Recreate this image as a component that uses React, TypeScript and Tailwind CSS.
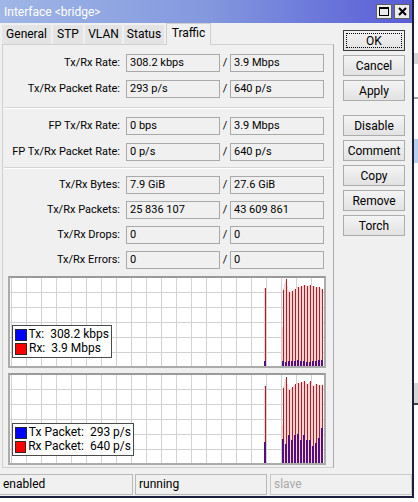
import React from "react";

const group1 = [
  ["Tx/Rx Rate:", "308.2 kbps", "3.9 Mbps"],
  ["Tx/Rx Packet Rate:", "293 p/s", "640 p/s"],
];
const group2 = [
  ["FP Tx/Rx Rate:", "0 bps", "3.9 Mbps"],
  ["FP Tx/Rx Packet Rate:", "0 p/s", "640 p/s"],
];
const group3 = [
  ["Tx/Rx Bytes:", "7.9 GiB", "27.6 GiB"],
  ["Tx/Rx Packets:", "25 836 107", "43 609 861"],
  ["Tx/Rx Drops:", "0", "0"],
  ["Tx/Rx Errors:", "0", "0"],
];

const tabs = [
  { name: "General", w: "w-[49px]" },
  { name: "STP", w: "w-[30px]" },
  { name: "VLAN", w: "w-[37px]" },
  { name: "Status", w: "w-[40px]" },
  { name: "Traffic", w: "w-[45px]" },
];
const buttons = ["OK", "Cancel", "Apply", "", "Disable", "Comment", "Copy", "Remove", "Torch"];

// graph data, in px from the top of the plot (88px tall)
const bytesChart = {
  single: { rx: 10, tx: 83 },
  rx: [12, 1, 14, 13, 11, 9, 8, 7, 8, 7, 8, 9, 9, 11],
  tx: [83, 84, 83, 83, 83, 82, 83, 83, 84, 84, 83, 83, 82, 82],
};
const packetChart = {
  single: { rx: 11, tx: 67 },
  rx: [13, 2, 15, 12, 9, 8, 7, 6, 9, 6, 11, 9, 10, 10],
  tx: [64, 69, 60, 65, 60, 59, 65, 60, 65, 65, 71, 68, 63, 53],
};

function Row({ label, a, b }: { label: string; a: string; b: string }) {
  return (
    <div className="flex items-center h-[18px]">
      <span className="w-[117px] text-right whitespace-nowrap">{label}</span>
      <div className="ml-[6px] w-[94px] h-[18px] border border-[#a9a9a9] bg-[#f0f0f0] pl-[3px] leading-[16px]">
        {a}
      </div>
      <span className="w-[10px] text-center">/</span>
      <div className="w-[94px] h-[18px] border border-[#a9a9a9] bg-[#f0f0f0] pl-[3px] leading-[16px]">
        {b}
      </div>
    </div>
  );
}

function Separator() {
  return <div className="mx-[1px] h-[2px] border-t border-[#d5d5d5] border-b border-b-white" />;
}

function Chart({ data }: { data: typeof bytesChart }) {
  const W = 314;
  const H = 88;
  const xs = data.rx.map((_, i) => 273 + i * 3);
  const pink =
    `272,${H} ` + xs.map((x, i) => `${x},${data.rx[i]}`).join(" ") + ` ${xs[xs.length - 1] + 1},${H}`;
  return (
    <svg width={W} height={H} className="block" shapeRendering="crispEdges">
      <rect width={W} height={H} fill="#fff" />
      {Array.from({ length: 21 }, (_, i) => (
        <rect key={"v" + i} x={1 + i * 15} y={0} width={1} height={H} fill="#d2d2d2" />
      ))}
      {Array.from({ length: 5 }, (_, i) => (
        <rect key={"h" + i} x={0} y={14 + i * 15} width={W} height={1} fill="#d2d2d2" />
      ))}
      <polygon points={pink} fill="#fbd3d3" />
      <rect x={254} y={data.single.rx} width={1} height={H - data.single.rx} fill="#fbd3d3" />
      <rect x={255} y={data.single.rx} width={1} height={H - data.single.rx} fill="#a8202a" />
      <rect x={254} y={data.single.tx} width={2} height={H - data.single.tx} fill="#520f7e" />
      {xs.map((x, i) => (
        <g key={x}>
          <rect x={x} y={data.rx[i]} width={1} height={H - data.rx[i]} fill="#a8202a" />
          <rect x={x - 1} y={data.tx[i]} width={2} height={H - data.tx[i]} fill="#520f7e" />
        </g>
      ))}
    </svg>
  );
}

function Legend({ tx, rx, className }: { tx: string; rx: string; className: string }) {
  return (
    <div className={"absolute bg-white border border-[#4a4a4a] px-[2px] py-[2px] text-[12px] leading-[13px] " + className}>
      <div className="flex items-center gap-[2px]">
        <span className="w-[12px] h-[12px] bg-[#0000ff] border border-[#202040]" />
        <span className="whitespace-pre">{tx}</span>
      </div>
      <div className="flex items-center gap-[2px] mt-[1px]">
        <span className="w-[12px] h-[12px] bg-[#ff0000] border border-[#402020]" />
        <span className="whitespace-pre">{rx}</span>
      </div>
    </div>
  );
}

function Graph({ children, data }: { children: React.ReactNode; data: typeof bytesChart }) {
  return (
    <div className="relative ml-[5px] w-[318px] h-[92px] border-2 border-[#ababab] border-t-[#9a9a9a]">
      <Chart data={data} />
      {children}
    </div>
  );
}

export default function App() {
  return (
    <div className="w-[418px] h-[502px] flex bg-white overflow-hidden text-[11px] text-black font-['Roboto','Liberation_Sans',sans-serif]">
      <div className="w-[414px] h-[498px] shrink-0 flex flex-col bg-[#f0f0f0] border-r-2 border-b-2 border-[#1d1d3c]">
        {/* title bar */}
        <div className="h-[23px] shrink-0 flex items-center pl-[4px] pr-[2px] bg-gradient-to-r from-[#9fb6e6] via-[#8498de] to-[#5a5bd6]">
          <span className="text-[12px] text-white">Interface &lt;bridge&gt;</span>
          <div className="ml-auto flex gap-[2px]">
            <div className="w-[16px] h-[15px] bg-[#ececec] border border-[#606060] flex items-center justify-center">
              <svg width="10" height="9" viewBox="0 0 10 9">
                <rect x="0.5" y="0.5" width="9" height="8" fill="none" stroke="#000" />
                <line x1="0" y1="1.5" x2="10" y2="1.5" stroke="#000" />
              </svg>
            </div>
            <div className="w-[16px] h-[15px] bg-[#ececec] border border-[#606060] flex items-center justify-center">
              <svg width="9" height="9" viewBox="0 0 9 9">
                <path d="M1 1 L8 8 M8 1 L1 8" stroke="#000" strokeWidth="2" />
              </svg>
            </div>
          </div>
        </div>

        <div className="h-[449px] shrink-0 flex">
          <div className="ml-[2px] w-[332px] flex flex-col">
            {/* tabs */}
            <div className="h-[21px] flex items-end gap-[2px]">
              {tabs.map((t) =>
                t.name === "Traffic" ? (
                  <div
                    key={t.name}
                    className={
                      t.w +
                      " h-[22px] -mb-[1px] bg-[#f0f0f0] border border-b-0 border-[#d0d0d0] text-[12px] leading-[18px] text-center relative z-10"
                    }
                  >
                    {t.name}
                  </div>
                ) : (
                  <div
                    key={t.name}
                    className={t.w + " h-[19px] bg-[#e4e4e4] text-[12px] leading-[19px] text-center"}
                  >
                    {t.name}
                  </div>
                )
              )}
            </div>
            {/* panel */}
            <div className="h-[424px] border border-[#d0d0d0] border-r-[#a9a9a9] flex flex-col">
              <div className="mt-[9px] flex flex-col gap-[8px]">
                {group1.map((r) => (
                  <Row key={r[0]} label={r[0]} a={r[1]} b={r[2]} />
                ))}
              </div>
              <div className="mt-[9px]">
                <Separator />
              </div>
              <div className="mt-[8px] flex flex-col gap-[8px]">
                {group2.map((r) => (
                  <Row key={r[0]} label={r[0]} a={r[1]} b={r[2]} />
                ))}
              </div>
              <div className="mt-[6px]">
                <Separator />
              </div>
              <div className="mt-[7px] flex flex-col gap-[7px]">
                {group3.map((r) => (
                  <Row key={r[0]} label={r[0]} a={r[1]} b={r[2]} />
                ))}
              </div>
              <div className="mt-[7px]">
                <Graph data={bytesChart}>
                  <Legend className="left-[2px] top-[47px] w-[100px]" tx="Tx:  308.2 kbps" rx="Rx:  3.9 Mbps" />
                </Graph>
              </div>
              <div className="mt-[5px]">
                <Graph data={packetChart}>
                  <Legend className="left-[2px] top-[48px] w-[122px]" tx="Tx Packet:  293 p/s" rx="Rx Packet:  640 p/s" />
                </Graph>
              </div>
            </div>
          </div>

          {/* buttons */}
          <div className="ml-[9px] pt-[7px] flex flex-col gap-[4px]">
            {buttons.map((b, i) =>
              b === "" ? (
                <div key={i} className="h-[6px]" />
              ) : (
                <div
                  key={b}
                  className={
                    "w-[62px] h-[21px] flex items-center justify-center text-[12px] bg-gradient-to-b from-[#f4f4f4] to-[#e2e2e2] border " +
                    (b === "OK" ? "border-[#3c3c3c]" : "border-[#acacac]")
                  }
                >
                  {b === "OK" ? (
                    <div className="w-[56px] h-[15px] border border-dotted border-black flex items-center justify-center">OK</div>
                  ) : (
                    b
                  )}
                </div>
              )
            )}
          </div>
        </div>

        {/* status bar */}
        <div className="mt-[2px] h-[21px] flex text-[12px]">
          <div className="w-[133px] border border-[#b9b9b9] border-l-0 pl-[3px] leading-[19px]">enabled</div>
          <div className="ml-[2px] w-[132px] border border-[#b9b9b9] pl-[3px] leading-[19px]">running</div>
          <div className="ml-[3px] flex-1 border border-[#c9c9c9] pl-[3px] leading-[19px] text-[#a8a8a8]">slave</div>
        </div>
      </div>

      {/* edge of the window behind */}
      <div className="w-[4px] flex flex-col">
        <div className="h-[53px] bg-white" />
        <div className="h-[11px] bg-[#d4d4d4]" />
        <div className="h-[33px] bg-white" />
        <div className="h-[2px] bg-[#a0a0a0]" />
        <div className="h-[40px] bg-white" />
        <div className="h-[24px] bg-[#b9cff0]" />
        <div className="h-[220px] bg-white" />
        <div className="h-[20px] bg-[#d6d6d6]" />
        <div className="h-[2px] bg-[#404040]" />
        <div className="flex-1 bg-white" />
      </div>
    </div>
  );
}
